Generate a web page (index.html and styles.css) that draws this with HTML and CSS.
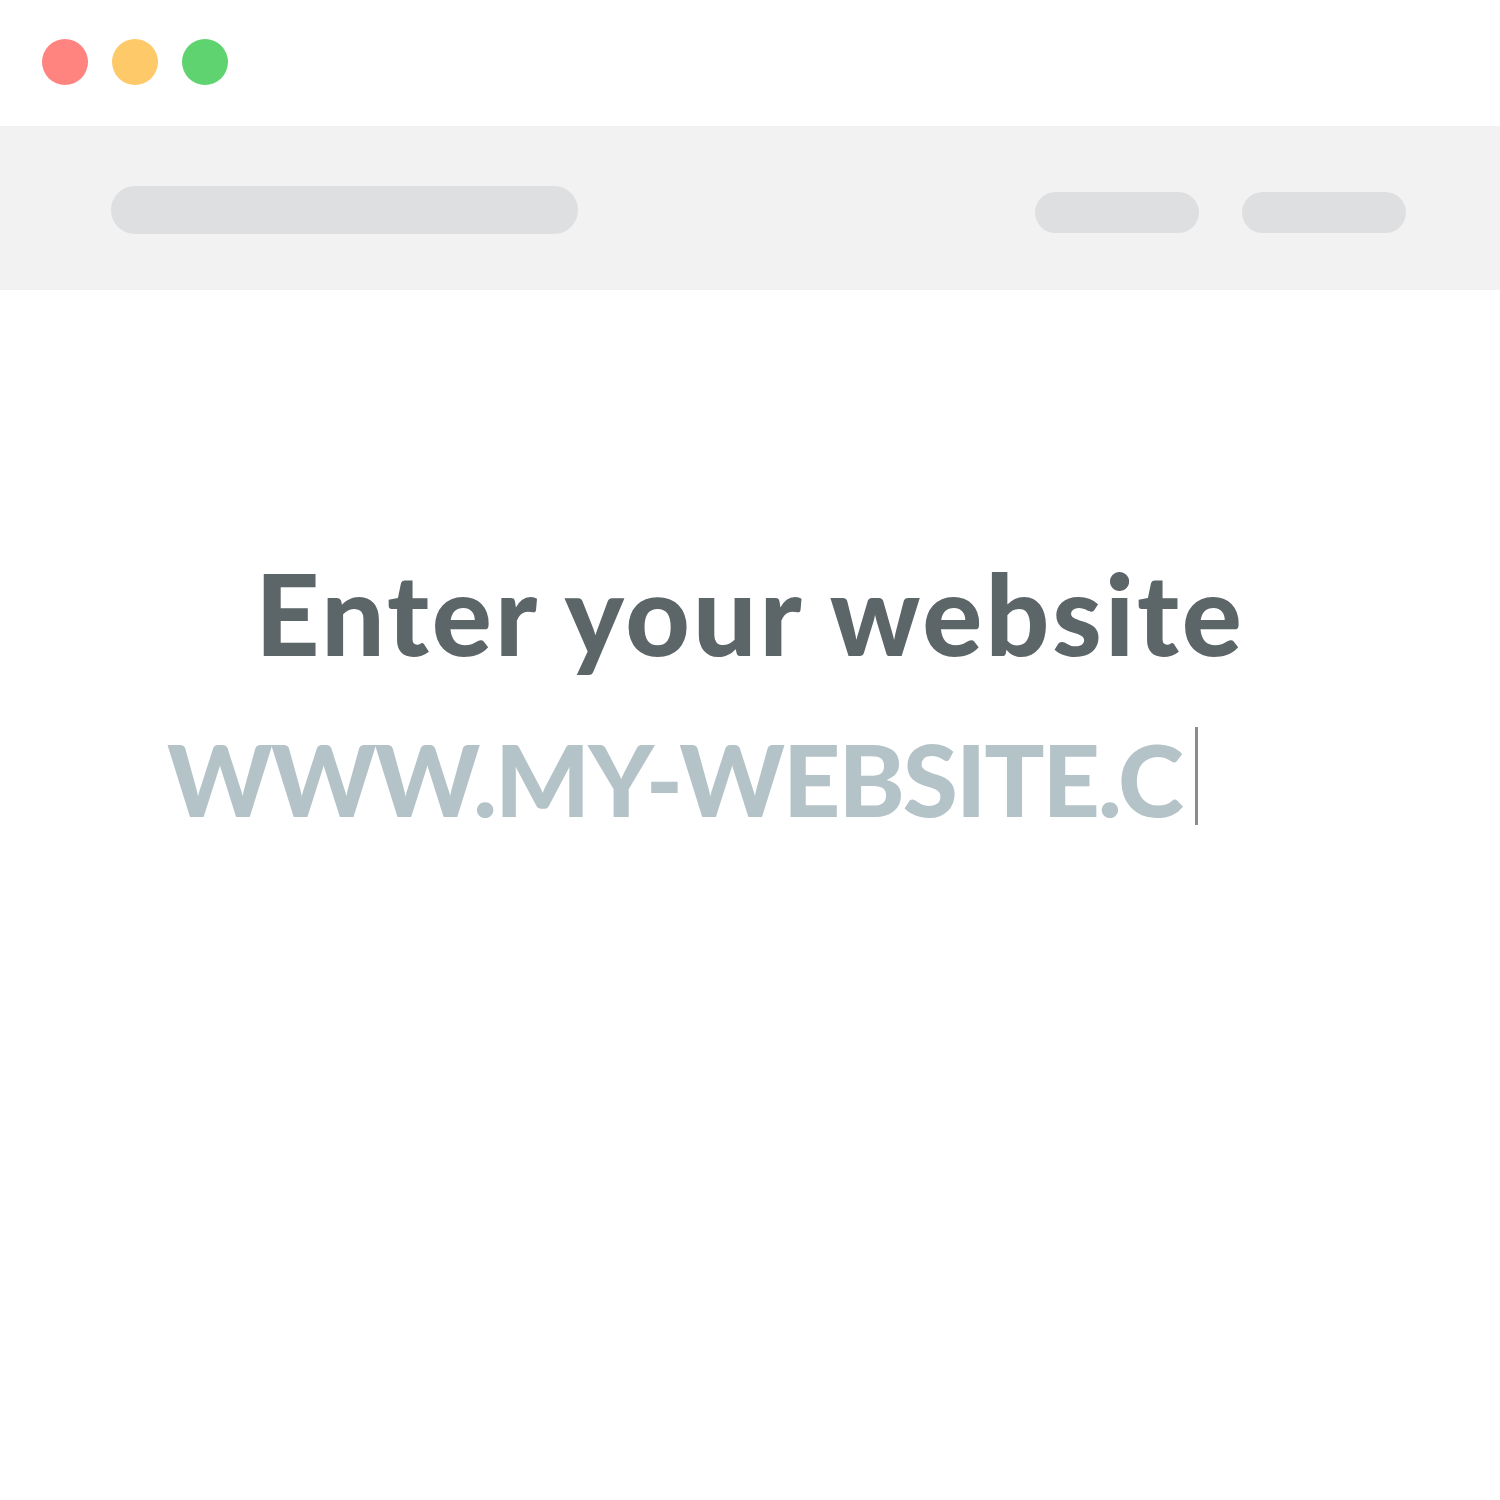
FILE: index.html
```html
<!DOCTYPE html>
<html>
<head>
<meta charset="utf-8">
<link rel="stylesheet" href="styles.css">
</head>
<body>
<div class="titlebar">
  <span class="dot red"></span>
  <span class="dot yellow"></span>
  <span class="dot green"></span>
</div>
<div class="navbar">
  <div class="pill wide"></div>
  <div class="nav-right">
    <div class="pill small"></div>
    <div class="pill small"></div>
  </div>
</div>
<main class="content">
  <h1 class="heading">Enter your website</h1>
  <div class="url-row">
    <span class="url">WWW.MY-WEBSITE.C</span><span class="cursor"></span>
  </div>
</main>
</body>
</html>
```
FILE: styles.css
```css
html, body {
  margin: 0;
  padding: 0;
  background: #ffffff;
  font-family: "Lato", "Liberation Sans", sans-serif;
}
.titlebar {
  height: 126px;
  display: flex;
  align-items: flex-start;
  gap: 24px;
  padding: 39px 0 0 42px;
  box-sizing: border-box;
}
.dot {
  width: 46px;
  height: 46px;
  border-radius: 50%;
  display: block;
}
.red { background: #ff8480; }
.yellow { background: #fec968; }
.green { background: #5ed36f; }
.navbar {
  height: 164px;
  background: #f1f2f1;
  display: flex;
  align-items: center;
  justify-content: space-between;
  padding: 0 94px 0 111px;
}
.pill {
  background: #dedfe0;
  border-radius: 24px;
}
.pill.wide {
  width: 467px;
  height: 48px;
  margin-top: 4px;
}
.nav-right {
  display: flex;
  gap: 43px;
  margin-top: 9px;
}
.pill.small {
  width: 164px;
  height: 41px;
  border-radius: 21px;
}
.content {
  padding-top: 263px;
}
.heading {
  margin: 0;
  text-align: center;
  font-weight: 900;
  font-size: 112px;
  line-height: 120px;
  color: #5c6567;
  letter-spacing: 3px;
}
.url-row {
  display: flex;
  align-items: center;
  padding-left: 167px;
  margin-top: 54px;
}
.url {
  font-weight: 900;
  font-size: 100px;
  line-height: 100px;
  color: #b4c3c8;
  letter-spacing: -2px;
}
.cursor {
  width: 3px;
  height: 98px;
  background: #8c8c8c;
  margin-left: 13px;
  margin-bottom: 4px;
}
```
